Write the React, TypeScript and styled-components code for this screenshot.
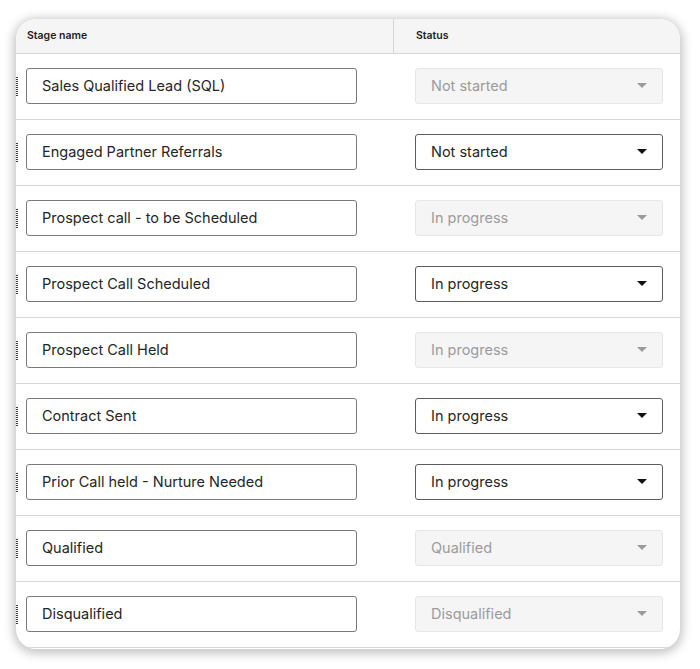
import styled, { createGlobalStyle } from "styled-components";

const GlobalStyle = createGlobalStyle`
  html, body {
    margin: 0;
    padding: 0;
    background: #ffffff;
  }
  body {
    font-family: "Inter", "Noto Sans", sans-serif;
  }
`;

const Page = styled.div`
  width: 700px;
  height: 669px;
  padding: 19px 20px 0 16px;
  box-sizing: border-box;
`;

const Card = styled.div`
  width: 664px;
  height: 630px;
  border-radius: 20px;
  background: #ffffff;
  box-shadow: 0 2px 10px 3px rgba(0, 0, 0, 0.22);
  overflow: hidden;
  display: flex;
  flex-direction: column;
`;

const HeaderRow = styled.div`
  display: grid;
  grid-template-columns: 377px 1fr;
  height: 34px;
  background: #f5f5f5;
  border-bottom: 1px solid #d6d6d6;
  flex-shrink: 0;
`;

const HeaderCell = styled.div<{ $divider?: boolean }>`
  display: flex;
  align-items: center;
  padding: 0 0 1px ${(p) => (p.$divider ? "22px" : "11px")};
  font-size: 10.5px;
  font-weight: 600;
  color: #1f1f1f;
  border-left: ${(p) => (p.$divider ? "1px solid #d6d6d6" : "none")};
`;

const Row = styled.div`
  position: relative;
  display: grid;
  grid-template-columns: 399px 1fr;
  align-items: start;
  padding-top: 14px;
  box-sizing: border-box;
  height: 66px;
  border-bottom: 1px solid #d6d6d6;
  flex-shrink: 0;
`;

const Handle = styled.span`
  position: absolute;
  left: 0;
  top: 23px;
  width: 2px;
  height: 20px;
  background-image: linear-gradient(#3a3a3a 50%, transparent 50%);
  background-size: 2px 2px;
`;

const NameCell = styled.div`
  padding-left: 10px;
`;

const NameInput = styled.div`
  width: 331px;
  height: 36px;
  box-sizing: border-box;
  border: 1px solid #7a7a7a;
  border-radius: 3px;
  display: flex;
  align-items: center;
  padding: 0 0 1px 15px;
  font-size: 14.5px;
  color: #262626;
`;

const Select = styled.div<{ $disabled?: boolean }>`
  width: 248px;
  height: 36px;
  box-sizing: border-box;
  border: 1px solid ${(p) => (p.$disabled ? "#e6e6e6" : "#5c5c5c")};
  background: ${(p) => (p.$disabled ? "#f5f5f5" : "#ffffff")};
  border-radius: 3px;
  display: flex;
  align-items: center;
  justify-content: space-between;
  padding: 0 15px 2px 15px;
  font-size: 14.5px;
  color: ${(p) => (p.$disabled ? "#9b9b9b" : "#262626")};
`;

const Caret = styled.span<{ $disabled?: boolean }>`
  width: 0;
  height: 0;
  border-left: 5px solid transparent;
  border-right: 5px solid transparent;
  border-top: 5px solid ${(p) => (p.$disabled ? "#9b9b9b" : "#111111")};
`;

const rows = [
  { name: "Sales Qualified Lead (SQL)", status: "Not started", disabled: true },
  { name: "Engaged Partner Referrals", status: "Not started", disabled: false },
  { name: "Prospect call - to be Scheduled", status: "In progress", disabled: true },
  { name: "Prospect Call Scheduled", status: "In progress", disabled: false },
  { name: "Prospect Call Held", status: "In progress", disabled: true },
  { name: "Contract Sent", status: "In progress", disabled: false },
  { name: "Prior Call held - Nurture Needed", status: "In progress", disabled: false },
  { name: "Qualified", status: "Qualified", disabled: true },
  { name: "Disqualified", status: "Disqualified", disabled: true },
];

export default function App() {
  return (
    <Page>
      <GlobalStyle />
      <Card>
        <HeaderRow>
          <HeaderCell>Stage name</HeaderCell>
          <HeaderCell $divider>Status</HeaderCell>
        </HeaderRow>
        {rows.map((r) => (
          <Row key={r.name}>
            <Handle />
            <NameCell>
              <NameInput>{r.name}</NameInput>
            </NameCell>
            <div>
              <Select $disabled={r.disabled}>
                {r.status}
                <Caret $disabled={r.disabled} />
              </Select>
            </div>
          </Row>
        ))}
      </Card>
    </Page>
  );
}
